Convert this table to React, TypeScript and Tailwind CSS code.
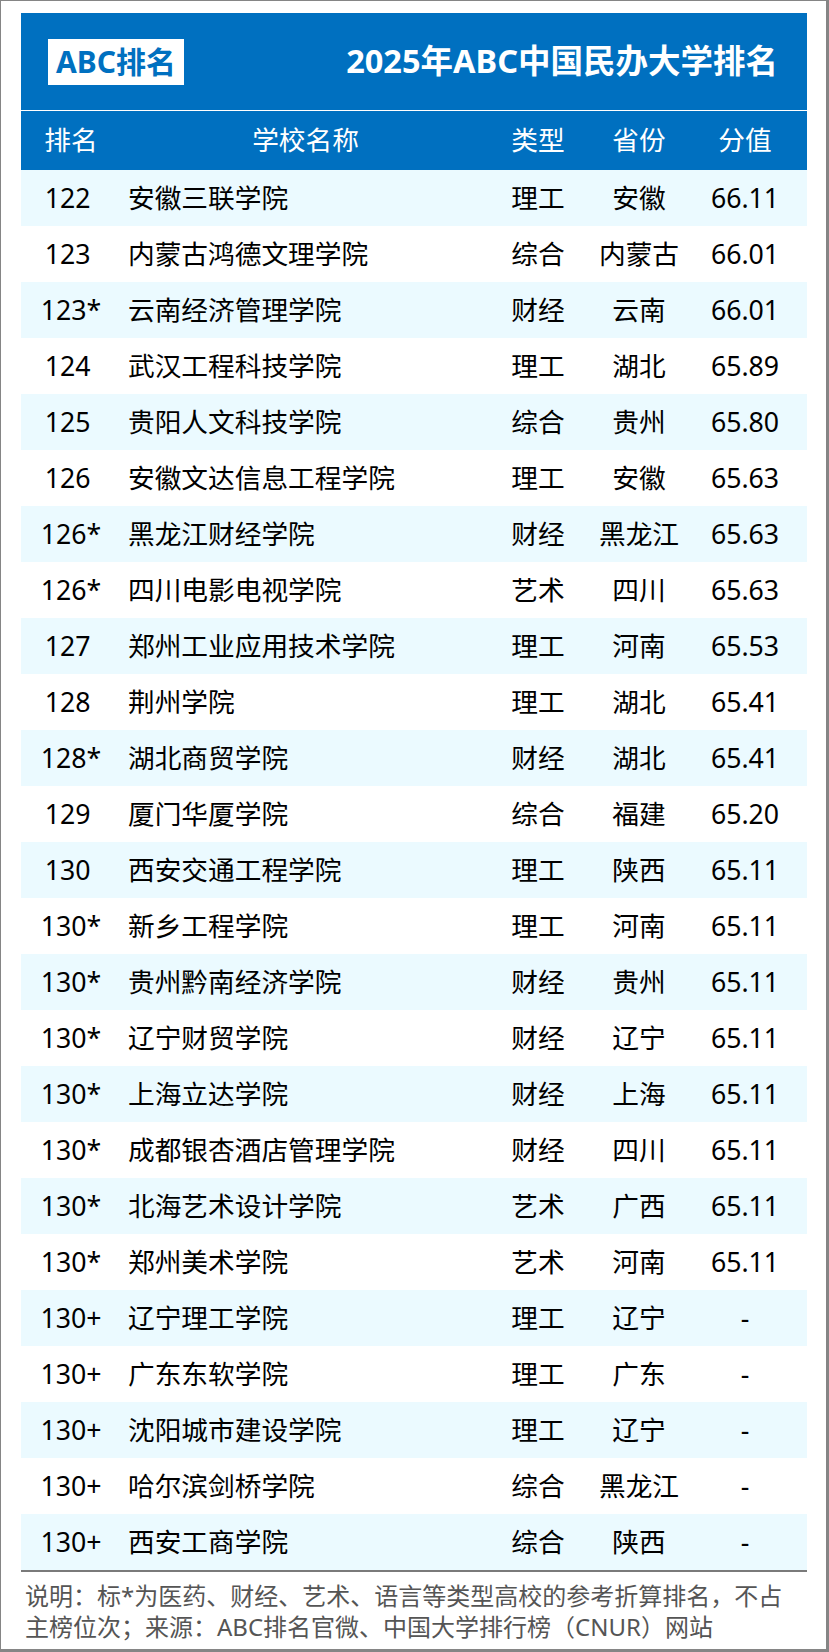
import React from "react";

const ROWS: [string, string, string, string, string][] = [
  ["122 ", "安徽三联学院", "理工", "安徽", "66.11"],
  ["123 ", "内蒙古鸿德文理学院", "综合", "内蒙古", "66.01"],
  ["123*", "云南经济管理学院", "财经", "云南", "66.01"],
  ["124 ", "武汉工程科技学院", "理工", "湖北", "65.89"],
  ["125 ", "贵阳人文科技学院", "综合", "贵州", "65.80"],
  ["126 ", "安徽文达信息工程学院", "理工", "安徽", "65.63"],
  ["126*", "黑龙江财经学院", "财经", "黑龙江", "65.63"],
  ["126*", "四川电影电视学院", "艺术", "四川", "65.63"],
  ["127 ", "郑州工业应用技术学院", "理工", "河南", "65.53"],
  ["128 ", "荆州学院", "理工", "湖北", "65.41"],
  ["128*", "湖北商贸学院", "财经", "湖北", "65.41"],
  ["129 ", "厦门华厦学院", "综合", "福建", "65.20"],
  ["130 ", "西安交通工程学院", "理工", "陕西", "65.11"],
  ["130*", "新乡工程学院", "理工", "河南", "65.11"],
  ["130*", "贵州黔南经济学院", "财经", "贵州", "65.11"],
  ["130*", "辽宁财贸学院", "财经", "辽宁", "65.11"],
  ["130*", "上海立达学院", "财经", "上海", "65.11"],
  ["130*", "成都银杏酒店管理学院", "财经", "四川", "65.11"],
  ["130*", "北海艺术设计学院", "艺术", "广西", "65.11"],
  ["130*", "郑州美术学院", "艺术", "河南", "65.11"],
  ["130+", "辽宁理工学院", "理工", "辽宁", "-"],
  ["130+", "广东东软学院", "理工", "广东", "-"],
  ["130+", "沈阳城市建设学院", "理工", "辽宁", "-"],
  ["130+", "哈尔滨剑桥学院", "综合", "黑龙江", "-"],
  ["130+", "西安工商学院", "综合", "陕西", "-"],
];

const cols = "grid grid-cols-[100px_369px_96px_106px_106px]";

export default function App() {
  return (
    <div className="w-[829px] h-[1652px] bg-white border-l border-t border-r-[3px] border-b-[3px] border-[#858585] pl-[20px] pr-[19px] pt-[12px] font-['Noto_Sans','Noto_Sans_CJK_SC',sans-serif]">
      {/* title band */}
      <div className="bg-[#0070c0] h-[97px] flex items-center justify-between pl-[27px] pr-[29px]">
        <div className="bg-white h-[46px] px-[8px] flex items-center text-[#0070c0] text-[30px] font-bold leading-none">
          ABC排名
        </div>
        <div className="text-white text-[32.5px] font-bold leading-none">
          2025年ABC中国民办大学排名
        </div>
      </div>
      <div className="h-px bg-white" />

      {/* table head */}
      <div className={`${cols} h-[59px] items-center bg-[#0070c0] text-white text-[26.7px] leading-none`}>
        <div className="text-center">排名</div>
        <div className="text-center">学校名称</div>
        <div className="text-center">类型</div>
        <div className="text-center">省份</div>
        <div className="text-center">分值</div>
      </div>

      {/* rows */}
      <div className="border-b-2 border-[#7a7a7a]">
        {ROWS.map((r, i) => (
          <div
            key={i}
            className={`${cols} h-[56px] items-center text-[26.7px] leading-none text-black ${
              i % 2 === 0 ? "bg-[#ebfaff]" : "bg-white"
            }`}
          >
            <div className="text-center whitespace-pre">{r[0]}</div>
            <div className="pl-[7px]">{r[1]}</div>
            <div className="text-center">{r[2]}</div>
            <div className="text-center">{r[3]}</div>
            <div className="text-center">{r[4]}</div>
          </div>
        ))}
      </div>

      {/* note */}
      <p className="mt-[8px] pl-[4px] text-[24px] leading-[31px] text-[#555555]">
        说明：标*为医药、财经、艺术、语言等类型高校的参考折算排名，不占
        <br />
        主榜位次；来源：ABC排名官微、中国大学排行榜（CNUR）网站
      </p>
    </div>
  );
}
